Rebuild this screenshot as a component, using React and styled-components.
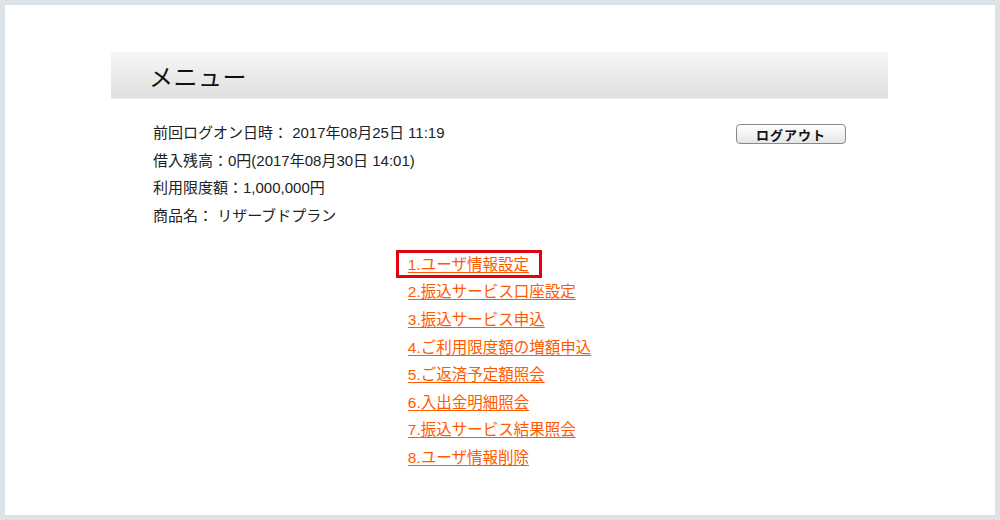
import React from "react"
import styled, { createGlobalStyle } from "styled-components"

const GlobalStyle = createGlobalStyle`
  html, body {
    margin: 0;
    padding: 0;
    background: #dce3e6;
  }
  body {
    font-family: "Liberation Sans", "Noto Sans CJK JP", sans-serif;
    color: #222;
  }
`

const Frame = styled.div`
  box-sizing: border-box;
  width: 1000px;
  height: 520px;
  padding: 5px;
  background: #dce3e6;
`

const Sheet = styled.div`
  height: 100%;
  background: #fff;
  padding-top: 47px;
  box-sizing: border-box;
`

const Panel = styled.div`
  width: 777px;
  margin-left: 106px;
`

const Header = styled.div`
  height: 47px;
  display: flex;
  align-items: center;
  padding-left: 38px;
  background: linear-gradient(to bottom, #f6f6f6, #e0e0e0);
  border-bottom: 1px solid #f0f0f0;
  box-sizing: border-box;
  font-size: 24px;
  color: #111;
  letter-spacing: 0.5px;
`

const InfoRow = styled.div`
  display: flex;
  justify-content: space-between;
  align-items: flex-start;
  padding: 0 42px;
  margin-top: 20px;
`

const InfoList = styled.div`
  display: flex;
  flex-direction: column;
`

const InfoLine = styled.div`
  font-size: 15px;
  line-height: 27.7px;
  color: #222;
`

const LogoutButton = styled.button`
  margin-top: 5px;
  width: 110px;
  height: 20px;
  padding: 0;
  border: 1px solid #8a8a8a;
  border-radius: 4px;
  background: linear-gradient(to bottom, #ffffff, #e6e6e6);
  font-family: "Liberation Sans", "Noto Sans CJK JP", sans-serif;
  font-size: 13px;
  font-weight: bold;
  color: #111;
  letter-spacing: 1px;
`

const Menu = styled.div`
  display: flex;
  justify-content: center;
  margin-top: 21px;
`

const MenuList = styled.ul`
  list-style: none;
  margin: 0;
  padding: 0;
`

const MenuItem = styled.li`
  position: relative;
  font-size: 15.5px;
  line-height: 27.6px;

  ${(p) =>
    p.$selected &&
    `
    &::after {
      content: "";
      position: absolute;
      left: -12px;
      top: -1px;
      width: 146px;
      bottom: 0;
      border: 3px solid #e60012;
      box-sizing: border-box;
    }
  `}
`

const MenuLink = styled.a`
  color: #ff5a00;
  text-decoration: underline;
  text-underline-offset: 2px;
`

const items = [
  "1.ユーザ情報設定",
  "2.振込サービス口座設定",
  "3.振込サービス申込",
  "4.ご利用限度額の増額申込",
  "5.ご返済予定額照会",
  "6.入出金明細照会",
  "7.振込サービス結果照会",
  "8.ユーザ情報削除",
]

const App = () => {
  return (
    <>
      <GlobalStyle />
      <Frame>
        <Sheet>
          <Panel>
            <Header>メニュー</Header>
            <InfoRow>
              <InfoList>
                <InfoLine>前回ログオン日時： 2017年08月25日 11:19</InfoLine>
                <InfoLine>借入残高：0円(2017年08月30日 14:01)</InfoLine>
                <InfoLine>利用限度額：1,000,000円</InfoLine>
                <InfoLine>商品名： リザーブドプラン</InfoLine>
              </InfoList>
              <LogoutButton type="button">ログアウト</LogoutButton>
            </InfoRow>
            <Menu>
              <MenuList>
                {items.map((label, i) => (
                  <MenuItem key={label} $selected={i === 0}>
                    <MenuLink href="#">{label}</MenuLink>
                  </MenuItem>
                ))}
              </MenuList>
            </Menu>
          </Panel>
        </Sheet>
      </Frame>
    </>
  )
}

export default App
